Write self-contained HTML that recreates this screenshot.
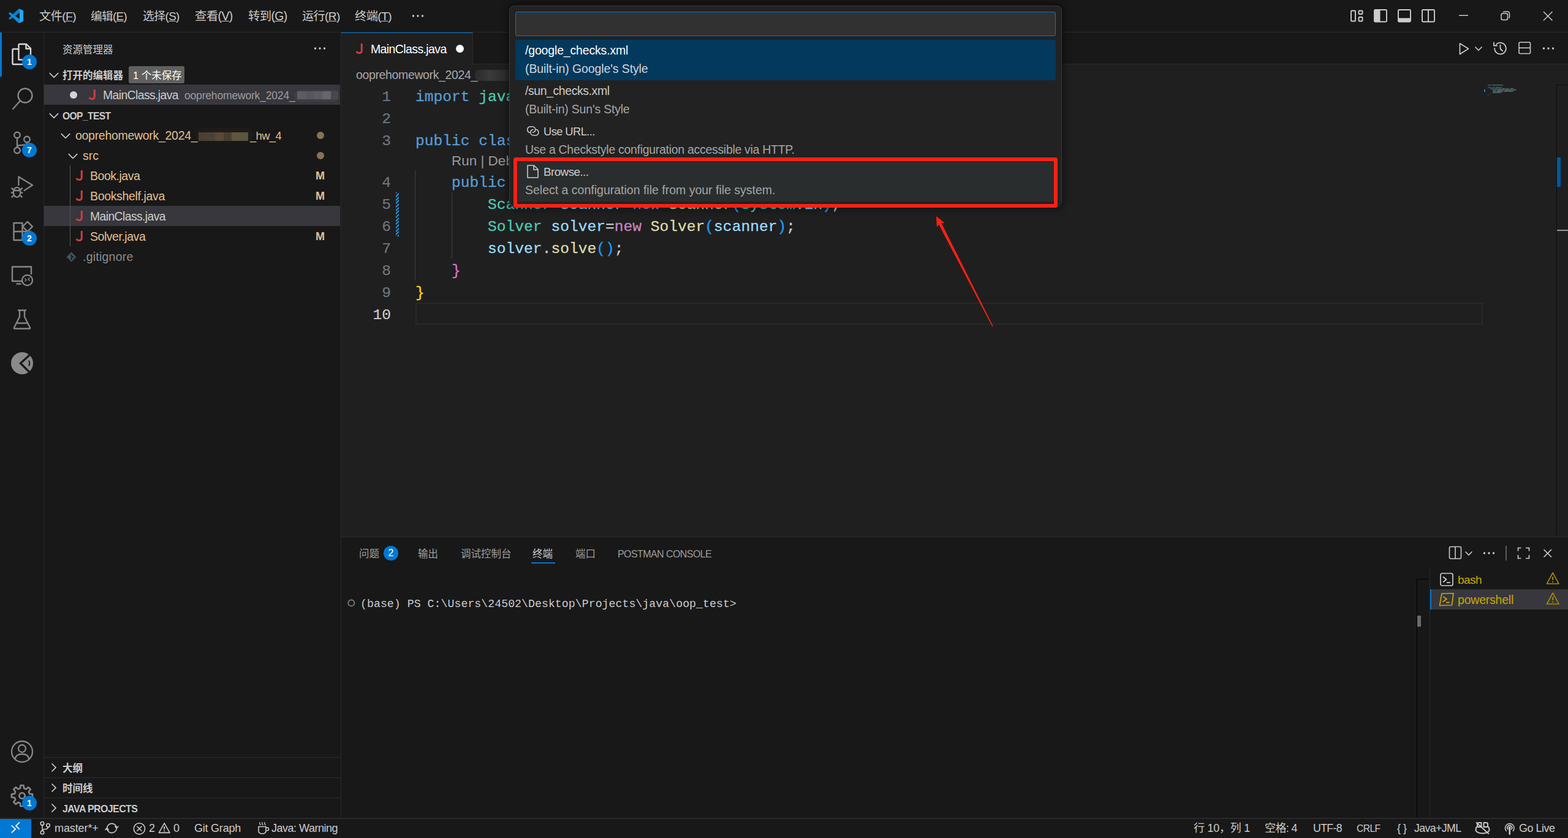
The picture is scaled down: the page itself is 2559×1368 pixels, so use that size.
<!DOCTYPE html>
<html lang="zh-CN">
<head>
<meta charset="utf-8">
<title>MainClass.java - oop_test - Visual Studio Code</title>
<style>
*{box-sizing:border-box;margin:0;padding:0}
html,body{width:2559px;height:1368px;overflow:hidden;background:#181818;}
body{font-family:"Liberation Sans","Noto Sans CJK SC",sans-serif;font-size:19.5px;color:#cccccc;position:relative;-webkit-font-smoothing:antialiased;}
.abs{position:absolute}
.t{position:absolute;white-space:nowrap;line-height:33px;height:33px;margin-top:1px}
svg{position:absolute;overflow:visible}
/* regions */
#titlebar{left:0;top:0;width:2559px;height:53px;background:#181818;border-bottom:1px solid #2b2b2b}
#activity{left:0;top:53px;width:72px;height:1282px;background:#181818;border-right:1px solid #2b2b2b}
#sidebar{left:72px;top:53px;width:485px;height:1282px;background:#181818;border-right:1px solid #2b2b2b}
#editor{left:557px;top:53px;width:2002px;height:823px;background:#1f1f1f}
#tabs{left:557px;top:53px;width:2002px;height:52px;background:#181818;border-bottom:1px solid #2b2b2b}
#panel{left:557px;top:876px;width:2002px;height:459px;background:#181818;border-top:1px solid #2b2b2b}
#status{left:0;top:1335px;width:2559px;height:33px;background:#181818;border-top:2px solid #292929}
.menu{top:9px;font-size:19.5px;color:#cccccc}
.row{position:absolute;left:72px;width:483px;height:33px}
.sel{background:#37373d}
.mod{color:#e2c08d}
.bold{font-weight:bold}
.J{color:#cc3e44;font-weight:bold;font-size:21px}
.code{margin-top:2.5px;-webkit-text-stroke:0.3px currentColor;position:absolute;white-space:pre;font-family:"Liberation Mono",monospace;font-size:24.6px;line-height:36px;height:36px;left:678px;color:#cccccc}
.ln{margin-top:2.5px;-webkit-text-stroke:0.2px currentColor;position:absolute;white-space:pre;font-family:"Liberation Mono",monospace;font-size:24.6px;line-height:36px;height:36px;width:80px;left:558px;text-align:right;color:#6e7681}
.kw{color:#569cd6}.ty{color:#4ec9b0}.va{color:#9cdcfe}.fn{color:#dcdcaa}.nw{color:#c586c0}
.b1{color:#ffd700}.b2{color:#da70d6}.b3{color:#179fff}
.st{position:absolute;white-space:nowrap;top:1337px;line-height:31px;height:31px;font-size:18px;color:#cccccc}
.badge{position:absolute;width:24px;height:24px;border-radius:12px;background:#0078d4;color:#fff;font-size:14px;font-weight:bold;text-align:center;line-height:24px}
.pt{top:887px;font-size:16.5px;color:#9d9d9d}
</style>
</head>
<body>
<div id="titlebar" class="abs"></div>
<div id="activity" class="abs"></div>
<div id="sidebar" class="abs"></div>
<div id="editor" class="abs"></div>
<div id="tabs" class="abs"></div>
<div id="panel" class="abs"></div>
<div id="status" class="abs"></div>
<!-- title bar -->
<svg style="left:13.9px;top:13.9px" width="24.2" height="24" viewBox="0 0 24.2 24">
  <path d="M16.5 0.2 L17.9 0.8 L17.9 6.8 L2.5 18.1 L0.2 16.6 Q-0.2 16.2 0.2 15.8 Z" fill="#0a7fcb"/>
  <path d="M16.5 23.8 L17.9 23.6 L17.9 17.3 L2.5 6.1 L0.2 7.4 Q-0.2 7.8 0.2 8.2 Z" fill="#0b8fdc"/>
  <path d="M17.3 0 L23.4 3 Q24.1 3.4 24.1 4.2 V19.8 Q24.1 20.6 23.4 21 L17.3 24 Q17.9 23.6 17.9 22.8 V1.2 Q17.9 0.4 17.3 0 Z" fill="#24a7f1"/>
</svg>
<div class="t menu" style="letter-spacing:-0.624px;font-size:19.25px;left:64px" id="m_1">文件(<u>F</u>)</div>
<div class="t menu" style="letter-spacing:-0.627px;font-size:18.64px;left:148px" id="m_2">编辑(<u>E</u>)</div>
<div class="t menu" style="letter-spacing:-0.626px;font-size:18.88px;left:233px" id="m_3">选择(<u>S</u>)</div>
<div class="t menu" style="letter-spacing:-0.626px;font-size:19.44px;left:318px" id="m_4">查看(<u>V</u>)</div>
<div class="t menu" style="letter-spacing:-0.618px;font-size:19.34px;left:405px" id="m_5">转到(<u>G</u>)</div>
<div class="t menu" style="letter-spacing:-0.613px;font-size:19.15px;left:493px" id="m_6">运行(<u>R</u>)</div>
<div class="t menu" style="letter-spacing:-0.611px;font-size:19.28px;left:579px" id="m_7">终端(<u>T</u>)</div>
<svg style="left:672px;top:23px" width="22" height="6"><circle cx="2.5" cy="3" r="1.7" fill="#ccc"/><circle cx="10" cy="3" r="1.7" fill="#ccc"/><circle cx="17.5" cy="3" r="1.7" fill="#ccc"/></svg>
<!-- layout icons -->
<svg style="left:2204px;top:16px" width="22" height="20" fill="none" stroke="#ccc" stroke-width="1.9"><rect x="1" y="1.5" width="7" height="17" rx="1"/><rect x="13.5" y="1.5" width="6" height="5.5" rx="1"/><rect x="13.5" y="12" width="6" height="6.5" rx="1"/></svg>
<svg style="left:2242px;top:15px" width="23" height="22" fill="none" stroke="#ccc" stroke-width="1.9"><rect x="1" y="1" width="20" height="19.5" rx="1.5"/><rect x="1.5" y="1.5" width="9" height="18.5" fill="#ccc" stroke="none"/></svg>
<svg style="left:2281px;top:15px" width="23" height="22" fill="none" stroke="#ccc" stroke-width="1.9"><rect x="1" y="1" width="20" height="19.5" rx="1.5"/><rect x="1.5" y="14.5" width="19" height="5.5" fill="#ccc" stroke="none"/></svg>
<svg style="left:2320px;top:15px" width="23" height="22" fill="none" stroke="#ccc" stroke-width="1.9"><rect x="1" y="1" width="20" height="19.5" rx="1.5"/><path d="M11 1 V20.5"/></svg>
<!-- window controls -->
<svg style="left:2381px;top:24px" width="16" height="3"><rect x="0" y="0.5" width="15" height="1.5" fill="#ccc"/></svg>
<svg style="left:2449px;top:18px" width="16" height="16" fill="none" stroke="#ccc" stroke-width="1.5"><rect x="1" y="4" width="10.5" height="10.5" rx="2.5"/><path d="M4 2.2 Q4.6 1 6.2 1 H11 Q14.5 1 14.5 4.5 V9.5 Q14.5 11 13.3 11.6"/></svg>
<svg style="left:2518px;top:18px" width="17" height="17" fill="none" stroke="#ccc" stroke-width="1.5"><path d="M1 1 L15.5 15.5 M15.5 1 L1 15.5"/></svg>

<!-- activity bar -->
<div class="abs" style="left:0;top:53px;width:3px;height:72px;background:#0078d4"></div>
<!-- files -->
<svg style="left:18px;top:70px" width="36" height="38" fill="none" stroke="#d7d7d7" stroke-width="2.4" stroke-linejoin="round"><path d="M12.5 27.5 V3.5 Q12.5 2 14 2 H25 L32 9 V26 Q32 27.5 30.5 27.5 Z"/><path d="M24.5 2.5 V9.5 H31.5"/><path d="M12.5 10 H4 Q2.5 10 2.5 11.5 V33.5 Q2.5 35 4 35 H21 Q22.5 35 22.5 33.5 V27.5"/></svg>
<!-- search -->
<svg style="left:18px;top:142px" width="38" height="40" fill="none" stroke="#868686" stroke-width="2.4"><circle cx="23" cy="14" r="11.5"/><path d="M15 22.5 L2.5 36.5"/></svg>
<!-- scm -->
<svg style="left:20px;top:213px" width="32" height="42" fill="none" stroke="#868686" stroke-width="2.4"><circle cx="8" cy="7.5" r="4.8"/><circle cx="24" cy="14.5" r="4.8"/><circle cx="8" cy="32.5" r="4.8"/><path d="M8 12.5 V27.5 M24 19.3 Q23.5 23 18 23.6 L8.5 24.8"/></svg>
<!-- debug -->
<svg style="left:16px;top:284px" width="40" height="42" fill="none" stroke="#868686" stroke-width="2.3" stroke-linejoin="round"><path d="M14.4 19 V4.5 L37 18.3 L22.8 27.6"/><ellipse cx="11.6" cy="29.8" rx="5.8" ry="8"/><path d="M6 27 H17.2 M5.8 26 L2.6 22.6 M17.4 26 L20.6 22.6 M5.6 30.5 H2 M17.6 30.5 H21.2 M6.2 35 L2.8 38.4 M17 35 L20.4 38.4"/></svg>
<!-- extensions -->
<svg style="left:20px;top:358px" width="36" height="38" fill="none" stroke="#868686" stroke-width="2.4" stroke-linejoin="round"><path d="M2.5 6 H16.5 V34 H2.5 Z M2.5 20 H16.5 M16.5 20 H30 V34 H16.5"/><path d="M24.9 3.8 L32.9 11.8 L24.9 19.8 L16.9 11.8 Z" fill="#181818"/></svg>
<!-- remote explorer -->
<svg style="left:17px;top:432px" width="40" height="36" fill="none" stroke="#868686" stroke-width="2.4" stroke-linejoin="round"><path d="M19 27 H3 V3.5 H34 V16"/><path d="M9.5 31.5 H17.5"/><circle cx="27.5" cy="25.5" r="8.5" fill="#181818"/><path d="M23.5 22.5 L26 25 L23.5 27.5 M31.5 21.5 L29 24 L31.5 26.5" stroke-width="1.6"/></svg>
<!-- flask -->
<svg style="left:20px;top:503px" width="34" height="36" fill="none" stroke="#868686" stroke-width="2.4" stroke-linejoin="round"><path d="M9 3.5 H23 M12 3.5 V14 L3 32 Q2.5 33.5 4 33.5 H28 Q29.5 33.5 29 32 L20 14 V3.5 M7 24.5 H25"/></svg>
<!-- codegeex-ish -->
<svg style="left:17px;top:574px" width="38" height="38"><circle cx="19" cy="19" r="18" fill="#8a8a8a"/><path d="M33 4 L16.5 19 L33 35.5" fill="none" stroke="#181818" stroke-width="3.2" stroke-linejoin="miter"/><path d="M30 14.5 Q32.5 19 30 23.5" fill="none" stroke="#181818" stroke-width="2"/></svg>
<!-- account -->
<svg style="left:15px;top:1206px" width="42" height="42" fill="none" stroke="#868686" stroke-width="2.3"><circle cx="21" cy="21" r="17"/><circle cx="21" cy="16" r="6"/><path d="M9.5 33.5 Q10.5 25 21 25 Q31.5 25 32.5 33.5"/></svg>
<!-- gear -->
<svg style="left:17px;top:1280px" width="38" height="38" viewBox="-19 -19 38 38" fill="none" stroke="#868686" stroke-width="2.7" stroke-linejoin="round"><circle r="4.7"/><path d="M-3.05 -12.23 L-2.54 -17.01 L2.54 -17.01 L3.05 -12.23 L6.49 -10.80 L10.23 -13.83 L13.83 -10.23 L10.80 -6.49 L12.23 -3.05 L17.01 -2.54 L17.01 2.54 L12.23 3.05 L10.80 6.49 L13.83 10.23 L10.23 13.83 L6.49 10.80 L3.05 12.23 L2.54 17.01 L-2.54 17.01 L-3.05 12.23 L-6.49 10.80 L-10.23 13.83 L-13.83 10.23 L-10.80 6.49 L-12.23 3.05 L-17.01 2.54 L-17.01 -2.54 L-12.23 -3.05 L-10.80 -6.49 L-13.83 -10.23 L-10.23 -13.83 L-6.49 -10.80 Z"/></svg>
<!-- badges -->
<div class="badge" style="left:36px;top:89px">1</div>
<div class="badge" style="left:36px;top:233px">7</div>
<div class="badge" style="left:36px;top:377px">2</div>
<div class="badge" style="left:36px;top:1299px">1</div>

<!-- sidebar -->
<div class="t" style="left:102px;top:64px;font-size:16.5px;color:#cccccc">资源管理器</div>
<svg style="left:512px;top:76px" width="22" height="6"><circle cx="2.5" cy="3" r="1.7" fill="#ccc"/><circle cx="10" cy="3" r="1.7" fill="#ccc"/><circle cx="17.5" cy="3" r="1.7" fill="#ccc"/></svg>
<!-- open editors header -->
<svg class="chd" style="left:80px;top:118px" width="17" height="10"><path d="M0.8 1.2 L8 8.4 L15.2 1.2" fill="none" stroke="#ccc" stroke-width="1.7"/></svg>
<div class="t bold" style="left:102px;top:106px;font-size:16.5px">打开的编辑器</div>
<div class="abs" style="left:210px;top:108px;width:91px;height:28px;background:#606060;border-radius:3px"></div>
<div class="t" style="left:217px;top:106px;font-size:16.5px;color:#fff">1 个未保存</div>
<div class="row sel" style="top:138px"></div>
<div class="abs" style="left:114px;top:149px;width:12px;height:12px;border-radius:6px;background:#d4d4d4"></div>
<svg style="left:143.7px;top:146.2px" width="14" height="19" fill="none" stroke="#cc3e44" stroke-width="3"><title>J</title><path d="M10.3 0 V11.3 Q10.3 15.6 6.4 15.6 Q3.4 15.6 1.6 13"/></svg>
<div class="t" style="letter-spacing:-0.59px;font-size:19.38px;;left:168px;top:138px;color:#cccccc" id="s_main1">MainClass.java</div>
<div class="t" style="letter-spacing:-0.178px;;left:301px;top:139px;color:#9d9d9d;font-size:17.5px" id="s_desc">ooprehomework_2024_</div>
<div class="abs" style="left:480px;top:146px;width:73px;height:20px;border-radius:9px;background:#3d3d43"></div><div class="abs" style="left:484.5px;top:149px;width:14px;height:12.5px;background:#5c5c61"></div><div class="abs" style="left:498.5px;top:149px;width:13.5px;height:12.5px;background:#56565b"></div><div class="abs" style="left:512px;top:149px;width:13.5px;height:12.5px;background:#5b5b60"></div><div class="abs" style="left:525.5px;top:149px;width:14px;height:12.5px;background:#67676b"></div><div class="abs" style="left:539.5px;top:149px;width:12px;height:12.5px;background:#47474c"></div>
<!-- OOP_TEST -->
<svg style="left:80px;top:184px" width="17" height="10"><path d="M0.8 1.2 L8 8.4 L15.2 1.2" fill="none" stroke="#ccc" stroke-width="1.7"/></svg>
<div class="t bold" style="letter-spacing:-0.598px;font-size:15.61px;;left:102px;top:172px;" id="s_oop">OOP_TEST</div>
<svg style="left:99px;top:217px" width="17" height="10"><path d="M0.8 1.2 L8 8.4 L15.2 1.2" fill="none" stroke="#ccc" stroke-width="1.7"/></svg>
<div class="t mod" style="letter-spacing:-0.295px;;left:123px;top:204px" id="s_fold">ooprehomework_2024_</div>
<div class="abs" style="left:320px;top:209px;width:93px;height:22px;border-radius:9px;background:#1e1b19"></div><div class="abs" style="left:323.8px;top:216px;width:13.7px;height:13.7px;background:#4e3f33"></div><div class="abs" style="left:337.4px;top:216px;width:13.7px;height:13.7px;background:#4a4237"></div><div class="abs" style="left:351.0px;top:216px;width:13.7px;height:13.7px;background:#5a4838"></div><div class="abs" style="left:364.6px;top:216px;width:13.7px;height:13.7px;background:#4a3d30"></div><div class="abs" style="left:378.2px;top:216px;width:13.7px;height:13.7px;background:#5e5640"></div><div class="abs" style="left:391.8px;top:216px;width:13.7px;height:13.7px;background:#59553f"></div>
<div class="t mod" style="letter-spacing:-0.594px;font-size:18.32px;;left:408px;top:204px" id="s_hw">_hw_4</div>
<div class="abs" style="left:517px;top:215px;width:12px;height:12px;border-radius:6px;background:#857354"></div>
<svg style="left:111px;top:250px" width="17" height="10"><path d="M0.8 1.2 L8 8.4 L15.2 1.2" fill="none" stroke="#ccc" stroke-width="1.7"/></svg>
<div class="t mod" style="left:135px;top:237px">src</div>
<div class="abs" style="left:517px;top:248px;width:12px;height:12px;border-radius:6px;background:#857354"></div>
<div class="abs" style="left:114px;top:270px;width:1px;height:132px;background:#585858"></div>
<svg style="left:122.7px;top:278.2px" width="14" height="19" fill="none" stroke="#cc3e44" stroke-width="3"><title>J</title><path d="M10.3 0 V11.3 Q10.3 15.6 6.4 15.6 Q3.4 15.6 1.6 13"/></svg>
<div class="t mod" style="letter-spacing:-0.471px;;left:147px;top:270px" id="s_book">Book.java</div>
<div class="t mod bold" style="left:515px;top:270px;font-size:18px">M</div>
<svg style="left:122.7px;top:311.2px" width="14" height="19" fill="none" stroke="#cc3e44" stroke-width="3"><title>J</title><path d="M10.3 0 V11.3 Q10.3 15.6 6.4 15.6 Q3.4 15.6 1.6 13"/></svg>
<div class="t mod" style="letter-spacing:-0.345px;;left:147px;top:303px" id="s_shelf">Bookshelf.java</div>
<div class="t mod bold" style="left:515px;top:303px;font-size:18px">M</div>
<div class="row sel" style="top:336px"></div>
<div class="abs" style="left:114px;top:336px;width:1px;height:33px;background:#585858"></div>
<svg style="left:122.7px;top:344.2px" width="14" height="19" fill="none" stroke="#cc3e44" stroke-width="3"><title>J</title><path d="M10.3 0 V11.3 Q10.3 15.6 6.4 15.6 Q3.4 15.6 1.6 13"/></svg>
<div class="t" style="letter-spacing:-0.59px;font-size:19.38px;;left:147px;top:336px;color:#cccccc" id="s_main2">MainClass.java</div>
<svg style="left:122.7px;top:377.2px" width="14" height="19" fill="none" stroke="#cc3e44" stroke-width="3"><title>J</title><path d="M10.3 0 V11.3 Q10.3 15.6 6.4 15.6 Q3.4 15.6 1.6 13"/></svg>
<div class="t mod" style="letter-spacing:-0.463px;;left:147px;top:369px" id="s_solver">Solver.java</div>
<div class="t mod bold" style="left:515px;top:369px;font-size:18px">M</div>
<svg style="left:108px;top:411px" width="17" height="17"><path d="M8.5 0.5 L16.5 8.5 L8.5 16.5 L0.5 8.5 Z" fill="#41535b"/><path d="M7 4.5 L10.5 8 M8.5 6 V12" stroke="#181818" stroke-width="1.3" fill="none"/><circle cx="8.5" cy="12" r="1.3" fill="#181818"/><circle cx="11" cy="8.5" r="1.3" fill="#181818"/></svg>
<div class="t" style="letter-spacing:0.228px;;left:135px;top:402px;color:#8c8c8c" id="s_git">.gitignore</div>
<!-- bottom sections -->
<div class="abs" style="left:72px;top:1236px;width:484px;height:1px;background:#2b2b2b"></div>
<div class="abs" style="left:72px;top:1269px;width:484px;height:1px;background:#2b2b2b"></div>
<div class="abs" style="left:72px;top:1302px;width:484px;height:1px;background:#2b2b2b"></div>
<svg style="left:83px;top:1245px" width="10" height="16"><path d="M1.5 1.5 L8 8 L1.5 14.5" fill="none" stroke="#ccc" stroke-width="1.7"/></svg>
<div class="t bold" style="left:102px;top:1237px;font-size:16.5px">大纲</div>
<svg style="left:83px;top:1278px" width="10" height="16"><path d="M1.5 1.5 L8 8 L1.5 14.5" fill="none" stroke="#ccc" stroke-width="1.7"/></svg>
<div class="t bold" style="left:102px;top:1270px;font-size:16.5px">时间线</div>
<svg style="left:83px;top:1311px" width="10" height="16"><path d="M1.5 1.5 L8 8 L1.5 14.5" fill="none" stroke="#ccc" stroke-width="1.7"/></svg>
<div class="t bold" style="letter-spacing:-0.594px;font-size:15.96px;;left:102px;top:1303px;" id="s_jp">JAVA PROJECTS</div>

<!-- tab -->
<div class="abs" style="left:557px;top:53px;width:215px;height:52px;background:#1f1f1f;border-right:1px solid #2b2b2b;border-top:1.5px solid #0078d4"></div>
<svg style="left:579.7px;top:71.2px" width="14" height="19" fill="none" stroke="#cc3e44" stroke-width="3"><title>J</title><path d="M10.3 0 V11.3 Q10.3 15.6 6.4 15.6 Q3.4 15.6 1.6 13"/></svg>
<div class="t" style="letter-spacing:-0.594px;font-size:19.48px;left:605px;top:63px;color:#ffffff" id="e_tab">MainClass.java</div>
<div class="abs" style="left:744px;top:72.5px;width:13px;height:13px;border-radius:7px;background:#ffffff"></div>
<!-- editor actions -->
<svg style="left:2380px;top:69px" width="20" height="22" fill="none" stroke="#ccc" stroke-width="1.7" stroke-linejoin="round"><path d="M2.5 2 L16.5 10.5 L2.5 19.5 Z"/></svg>
<svg style="left:2406px;top:75px" width="14" height="9"><path d="M1.5 1.5 L7 7 L12.5 1.5" fill="none" stroke="#ccc" stroke-width="1.6"/></svg>
<svg style="left:2436px;top:67px" width="25" height="24" fill="none" stroke="#ccc" stroke-width="1.8" stroke-linecap="round" stroke-linejoin="round"><path d="M3.2 12 A9.3 9.3 0 1 0 6.2 5.2"/><path d="M2 2.5 V7.5 H7"/><path d="M12.5 6.5 V12.5 L16 16"/></svg>
<svg style="left:2478px;top:68px" width="21" height="21" fill="none" stroke="#ccc" stroke-width="1.6"><rect x="1" y="1" width="18.5" height="18.5" rx="2"/><path d="M1 10.2 H19.5"/></svg>
<svg style="left:2517px;top:76px" width="22" height="6"><circle cx="2.5" cy="3" r="1.7" fill="#ccc"/><circle cx="10" cy="3" r="1.7" fill="#ccc"/><circle cx="17.5" cy="3" r="1.7" fill="#ccc"/></svg>
<!-- breadcrumb -->
<div class="t" style="letter-spacing:-0.363px;left:581px;top:105px;color:#a9a9a9" id="e_bc">ooprehomework_2024_</div>
<div class="abs" style="left:775px;top:114px;width:60px;height:18px;border-radius:6px;background:linear-gradient(90deg,#2a2a2a,#3a3a3a 40%,#303030 70%,#2c2c2c)"></div>
<!-- gutter / guides -->
<div class="abs" style="left:646px;top:314px;width:5px;height:72px;background:repeating-linear-gradient(135deg,#2090d8 0 2px,#1f1f1f 2px 4px)"></div>
<div class="abs" style="left:677px;top:278px;width:1px;height:180px;background:#404040"></div>
<div class="abs" style="left:736.5px;top:314px;width:1px;height:108px;background:#404040"></div>
<div class="abs" style="left:678px;top:494px;width:1742px;height:36px;border:2px solid #282828"></div>
<!-- line numbers -->
<div class="ln" style="top:138px">1</div>
<div class="ln" style="top:174px">2</div>
<div class="ln" style="top:210px">3</div>
<div class="ln" style="top:278px">4</div>
<div class="ln" style="top:314px">5</div>
<div class="ln" style="top:350px">6</div>
<div class="ln" style="top:386px">7</div>
<div class="ln" style="top:422px">8</div>
<div class="ln" style="top:458px">9</div>
<div class="ln" style="top:494px;color:#cccccc">10</div>
<!-- code -->
<div class="code" style="top:138px"><span class="kw">import</span> <span class="ty">java</span>.<span class="ty">util</span>.<span class="ty">Scanner</span>;</div>
<div class="code" style="top:210px"><span class="kw">public</span> <span class="kw">class</span> <span class="ty">MainClass</span> <span class="b1">{</span></div>
<div class="t" style="left:737px;top:245px;font-size:22.5px;color:#999999" id="e_lens">Run | Debug</div>
<div class="code" style="top:278px">    <span class="kw">public</span> <span class="kw">static</span> <span class="ty">void</span> <span class="fn">main</span><span class="b2">(</span><span class="ty">String</span><span class="b3">[]</span> <span class="va">args</span><span class="b2">)</span> <span class="b2">{</span></div>
<div class="code" style="top:314px">        <span class="ty">Scanner</span> <span class="va">scanner</span>=<span class="nw">new</span> <span class="fn">Scanner</span><span class="b3">(</span><span class="ty">System</span>.<span class="va">in</span><span class="b3">)</span>;</div>
<div class="code" style="top:350px">        <span class="ty">Solver</span> <span class="va">solver</span>=<span class="nw">new</span> <span class="fn">Solver</span><span class="b3">(</span><span class="va">scanner</span><span class="b3">)</span>;</div>
<div class="code" style="top:386px">        <span class="va">solver</span>.<span class="fn">solve</span><span class="b3">()</span>;</div>
<div class="code" style="top:422px">    <span class="b2">}</span></div>
<div class="code" style="top:458px"><span class="b1">}</span></div>
<!-- minimap -->
<div class="abs" style="left:2428px;top:138px;width:6px;height:2px;background:#4f86b8;opacity:.45"></div><div class="abs" style="left:2435px;top:138px;width:18px;height:2px;background:#3fa892;opacity:.45"></div><div class="abs" style="left:2428px;top:142px;width:6px;height:2px;background:#4f86b8;opacity:.45"></div><div class="abs" style="left:2435px;top:142px;width:5px;height:2px;background:#4f86b8;opacity:.45"></div><div class="abs" style="left:2441px;top:142px;width:9px;height:2px;background:#3fa892;opacity:.45"></div><div class="abs" style="left:2451px;top:142px;width:1px;height:2px;background:#8a8a8a;opacity:.45"></div><div class="abs" style="left:2432px;top:144px;width:6px;height:2px;background:#4f86b8;opacity:.45"></div><div class="abs" style="left:2439px;top:144px;width:6px;height:2px;background:#4f86b8;opacity:.45"></div><div class="abs" style="left:2446px;top:144px;width:4px;height:2px;background:#3fa892;opacity:.45"></div><div class="abs" style="left:2451px;top:144px;width:4px;height:2px;background:#aaa987;opacity:.45"></div><div class="abs" style="left:2455px;top:144px;width:1px;height:2px;background:#a06fa0;opacity:.45"></div><div class="abs" style="left:2456px;top:144px;width:6px;height:2px;background:#3fa892;opacity:.45"></div><div class="abs" style="left:2462px;top:144px;width:2px;height:2px;background:#1a7fc0;opacity:.45"></div><div class="abs" style="left:2465px;top:144px;width:4px;height:2px;background:#7fb0c8;opacity:.45"></div><div class="abs" style="left:2469px;top:144px;width:1px;height:2px;background:#a06fa0;opacity:.45"></div><div class="abs" style="left:2471px;top:144px;width:1px;height:2px;background:#a06fa0;opacity:.45"></div><div class="abs" style="left:2436px;top:146px;width:7px;height:2px;background:#3fa892;opacity:.45"></div><div class="abs" style="left:2444px;top:146px;width:7px;height:2px;background:#7fb0c8;opacity:.45"></div><div class="abs" style="left:2451px;top:146px;width:1px;height:2px;background:#8a8a8a;opacity:.45"></div><div class="abs" style="left:2452px;top:146px;width:3px;height:2px;background:#a06fa0;opacity:.45"></div><div class="abs" style="left:2456px;top:146px;width:7px;height:2px;background:#aaa987;opacity:.45"></div><div class="abs" style="left:2463px;top:146px;width:1px;height:2px;background:#1a7fc0;opacity:.45"></div><div class="abs" style="left:2464px;top:146px;width:6px;height:2px;background:#3fa892;opacity:.45"></div><div class="abs" style="left:2470px;top:146px;width:1px;height:2px;background:#8a8a8a;opacity:.45"></div><div class="abs" style="left:2471px;top:146px;width:2px;height:2px;background:#7fb0c8;opacity:.45"></div><div class="abs" style="left:2473px;top:146px;width:1px;height:2px;background:#1a7fc0;opacity:.45"></div><div class="abs" style="left:2474px;top:146px;width:1px;height:2px;background:#8a8a8a;opacity:.45"></div><div class="abs" style="left:2436px;top:148px;width:6px;height:2px;background:#3fa892;opacity:.45"></div><div class="abs" style="left:2443px;top:148px;width:6px;height:2px;background:#7fb0c8;opacity:.45"></div><div class="abs" style="left:2449px;top:148px;width:1px;height:2px;background:#8a8a8a;opacity:.45"></div><div class="abs" style="left:2450px;top:148px;width:3px;height:2px;background:#a06fa0;opacity:.45"></div><div class="abs" style="left:2454px;top:148px;width:6px;height:2px;background:#aaa987;opacity:.45"></div><div class="abs" style="left:2460px;top:148px;width:1px;height:2px;background:#1a7fc0;opacity:.45"></div><div class="abs" style="left:2461px;top:148px;width:7px;height:2px;background:#7fb0c8;opacity:.45"></div><div class="abs" style="left:2468px;top:148px;width:1px;height:2px;background:#1a7fc0;opacity:.45"></div><div class="abs" style="left:2469px;top:148px;width:1px;height:2px;background:#8a8a8a;opacity:.45"></div><div class="abs" style="left:2436px;top:150px;width:6px;height:2px;background:#7fb0c8;opacity:.45"></div><div class="abs" style="left:2442px;top:150px;width:1px;height:2px;background:#8a8a8a;opacity:.45"></div><div class="abs" style="left:2443px;top:150px;width:5px;height:2px;background:#aaa987;opacity:.45"></div><div class="abs" style="left:2448px;top:150px;width:2px;height:2px;background:#1a7fc0;opacity:.45"></div><div class="abs" style="left:2450px;top:150px;width:1px;height:2px;background:#8a8a8a;opacity:.45"></div><div class="abs" style="left:2432px;top:152px;width:1px;height:2px;background:#a06fa0;opacity:.45"></div><div class="abs" style="left:2428px;top:154px;width:1px;height:2px;background:#c0a820;opacity:.45"></div><div class="abs" style="left:2422px;top:146px;width:2px;height:4px;background:#0a84e0"></div>
<!-- overview ruler -->
<div class="abs" style="left:2540px;top:138px;width:19px;height:738px;border-left:1px solid #0e0e0e;border-top:1px solid #0e0e0e"></div>
<div class="abs" style="left:2541px;top:257px;width:6px;height:48px;background:#005a9e"></div>
<div class="abs" style="left:2541px;top:375px;width:18px;height:2px;background:#9a9a9a"></div>

<!-- panel tabs -->
<div class="t pt" style="left:586px" id="p_1">问题</div>
<div class="badge" style="left:626px;top:891px;font-weight:normal;font-size:16px">2</div>
<div class="t pt" style="left:682px" id="p_2">输出</div>
<div class="t pt" style="left:752px" id="p_3">调试控制台</div>
<div class="t pt" style="left:869px;color:#cccccc" id="p_4">终端</div>
<div class="abs" style="left:867px;top:918px;width:39px;height:2px;background:#0078d4"></div>
<div class="t pt" style="left:939px" id="p_5">端口</div>
<div class="t pt" style="letter-spacing:-0.595px;font-size:16.04px;left:1008px" id="p_6">POSTMAN CONSOLE</div>
<!-- panel actions -->
<svg style="left:2364px;top:891px" width="23" height="23" fill="none" stroke="#ccc" stroke-width="1.6"><rect x="1.5" y="1.5" width="19" height="19.5" rx="2"/><path d="M11 1.5 V21"/></svg>
<svg style="left:2390px;top:899px" width="14" height="9"><path d="M1.5 1.5 L7 7 L12.5 1.5" fill="none" stroke="#ccc" stroke-width="1.6"/></svg>
<svg style="left:2420px;top:900px" width="22" height="6"><circle cx="2.5" cy="3" r="1.7" fill="#ccc"/><circle cx="10" cy="3" r="1.7" fill="#ccc"/><circle cx="17.5" cy="3" r="1.7" fill="#ccc"/></svg>
<div class="abs" style="left:2457px;top:891px;width:2px;height:24px;background:#5a5a5a"></div>
<svg style="left:2476px;top:893px" width="22" height="20" fill="none" stroke="#ccc" stroke-width="1.7"><path d="M1.5 6.5 V1.5 H6.5 M14 1.5 H19.5 V6.5 M19.5 13 V18.5 H14 M6.5 18.5 H1.5 V13"/></svg>
<svg style="left:2518px;top:896px" width="16" height="15" fill="none" stroke="#ccc" stroke-width="1.7"><path d="M1.5 1 L14 13.5 M14 1 L1.5 13.5"/></svg>
<!-- terminal -->
<svg style="left:566px;top:977px" width="15" height="15"><circle cx="7.3" cy="7.3" r="5" fill="none" stroke="#6e6e6e" stroke-width="2.2"/></svg>
<div class="abs" style="left:588px;top:968px;height:36px;line-height:36px;white-space:pre;font-family:'Liberation Mono',monospace;font-size:18.28px;color:#cccccc" id="p_term">(base) PS C:\Users\24502\Desktop\Projects\java\oop_test&gt;</div>
<!-- terminal scrollbar / overview -->
<div class="abs" style="left:2312px;top:945px;width:22px;height:390px;border-left:1px solid #000;border-top:1px solid #000"></div>
<div class="abs" style="left:2313px;top:1005px;width:6px;height:18px;background:#6b6b6b"></div>
<div class="abs" style="left:2333px;top:929px;width:1px;height:406px;background:#2b2b2b"></div>
<!-- terminal tabs -->
<svg style="left:2350px;top:935px" width="23" height="23" fill="none" stroke="#ccc" stroke-width="1.7" stroke-linejoin="round"><rect x="1" y="1" width="20" height="20" rx="2.5"/><path d="M5 6.5 L10.5 11 L5 15.5" stroke-width="1.8"/><path d="M11 16 H17" stroke-width="1.8"/></svg>
<div class="t" style="letter-spacing:-0.588px;font-size:19.13px;left:2379px;top:929px;color:#cca700" id="p_bash">bash</div>
<svg style="left:2523px;top:933px" width="23" height="22" fill="none" stroke="#a88b00" stroke-width="1.6" stroke-linejoin="round"><path d="M11.2 2 L21 20 H1.5 Z"/><path d="M11.2 8.5 V14 M11.2 16 V18" stroke-width="2"/></svg>
<div class="abs" style="left:2334px;top:962px;width:225px;height:33px;background:#37373d"></div>
<div class="abs" style="left:2334px;top:962px;width:2px;height:33px;background:#0078d4"></div>
<svg style="left:2348px;top:967px" width="27" height="24" fill="none" stroke="#cca700" stroke-width="1.7" stroke-linejoin="round"><path d="M5 2 L24 1.5 L21.5 21 L1.5 21.5 Z"/><path d="M7.5 7 L13 11 L6.5 15.5" stroke-width="1.8"/><path d="M12 16.5 H18" stroke-width="1.8"/></svg>
<div class="t" style="letter-spacing:-0.212px;left:2379px;top:962px;color:#cca700" id="p_ps">powershell</div>
<svg style="left:2523px;top:966px" width="23" height="22" fill="none" stroke="#a88b00" stroke-width="1.6" stroke-linejoin="round"><path d="M11.2 2 L21 20 H1.5 Z"/><path d="M11.2 8.5 V14 M11.2 16 V18" stroke-width="2"/></svg>

<!-- status bar -->
<div class="abs" style="left:0;top:1337px;width:51px;height:31px;background:#0078d4"></div>


<svg style="left:0;top:1336px" width="300" height="32" fill="none" stroke="#ccc" stroke-width="1.6" stroke-linejoin="round">
<g transform="translate(0,-1336)">
<path d="M18.8 1347.6 L25.2 1353.5 L18.8 1359.3 M31.9 1342.3 L26 1348.2 L31.9 1354" stroke="#fff" stroke-width="1.7" stroke-linejoin="miter"/>
<circle cx="69" cy="1344.3" r="2.8"/><circle cx="78.5" cy="1347.3" r="2.8"/><circle cx="69" cy="1359" r="2.8"/><path d="M69 1347.1 V1356.2 M78.5 1350.1 Q78.3 1353.4 73.5 1353.8 Q69.6 1354 69 1356.2"/>
<path d="M174.6 1352 A7.9 7.9 0 0 1 190.3 1351 M187.9 1349.2 L190.4 1352 L192.9 1349.2" stroke-linecap="round"/>
<path d="M190.3 1352 A7.9 7.9 0 0 1 174.6 1353 M172 1354.6 L174.5 1351.8 L177 1354.6" stroke-linecap="round"/>
<circle cx="227.4" cy="1352.8" r="9.1"/><path d="M223.4 1348.8 L231.4 1356.8 M231.4 1348.8 L223.4 1356.8"/>
<path d="M268.2 1343.8 L277 1359.4 H259.4 Z"/><path d="M268.2 1349.2 V1354 M268.2 1355.6 V1357.3" stroke-width="1.9"/>
</g></svg>
<div class="st" style="letter-spacing:-0.104px;left:89px" id="t_master">master*+</div>


<div class="st" style="left:243px">2</div>

<div class="st" style="left:283px">0</div>
<div class="st" style="letter-spacing:-0.226px;left:317px" id="t_gg">Git Graph</div>
<svg style="left:419px;top:1341px" width="21" height="22" fill="none" stroke="#ccc" stroke-width="1.6" stroke-linecap="round" stroke-linejoin="round"><path d="M3 8.5 H15 V15 Q15 20 9 20 Q3 20 3 15 Z"/><path d="M15 10 H17 Q19.5 10 19.5 12.5 Q19.5 15 17 15 H15"/><path d="M5 1.5 Q4 3.5 6 5.5 M9 1.5 Q8 3.5 10 5.5 M13 1.5 Q12 3.5 14 5.5" stroke-width="1.3"/></svg>
<div class="st" style="letter-spacing:-0.492px;left:443px" id="t_jw">Java: Warning</div>
<div class="st" style="letter-spacing:-0.237px;left:1948px" id="t_pos">行 10，列 1</div>
<div class="st" style="letter-spacing:-0.599px;left:2064px" id="t_sp">空格: 4</div>
<div class="st" style="letter-spacing:-0.596px;font-size:17.68px;left:2143px" id="t_utf">UTF-8</div>
<div class="st" style="letter-spacing:-0.592px;font-size:15.7px;left:2214px" id="t_crlf">CRLF</div>
<div class="st" style="left:2280px;letter-spacing:4px" id="t_br">{}</div>
<div class="st" style="letter-spacing:-0.594px;font-size:17.73px;left:2308px" id="t_jml">Java+JML</div>
<svg style="left:2407px;top:1341px" width="25" height="22" fill="none" stroke="#ccc" stroke-width="1.9" stroke-linejoin="round"><path d="M4 4 Q4 2 7 2 H10.5 V9 H6 Q4 9 4 7 Z M14.5 2 H18 Q21 2 21 4 V7 Q21 9 19 9 H14.5 Z"/><path d="M4 8 Q1.5 10 1.5 13 V15 Q5 19.5 12.5 19.5 Q20 19.5 23.5 15 V13 Q23.5 10 21 8"/><path d="M2 1.5 L23 20.5" stroke-width="1.8"/></svg>
<svg style="left:2455px;top:1342px" width="18" height="21" fill="none" stroke="#ccc" stroke-width="1.6" stroke-linecap="round"><path d="M3.2 14.5 A7.3 7.3 0 1 1 14.4 14.5"/><path d="M5.9 11.8 A3.8 3.8 0 1 1 11.7 11.8"/><circle cx="8.8" cy="9.2" r="1.2" fill="#ccc"/><path d="M8.8 11 V19.5" stroke-width="2.6"/></svg>
<div class="st" style="letter-spacing:-0.507px;left:2479px" id="t_gl">Go Live</div>

<!-- quick pick -->
<div class="abs" style="left:831px;top:9px;width:902px;height:329px;background:#222222;border:1px solid #3a3a3a;border-radius:9px;box-shadow:0 0 12px 3px rgba(0,0,0,.48)"></div>
<div class="abs" style="left:841px;top:19px;width:882px;height:40px;background:#313131;border:1px solid #0078d4;border-radius:3px"></div>
<div class="abs" style="left:841px;top:65px;width:882px;height:66px;background:#04395e;border-radius:4px"></div>
<div class="abs" style="left:845px;top:263px;width:876px;height:66px;background:#2a2d2e"></div>
<div class="t" style="letter-spacing:-0.165px;left:857px;top:65px;color:#ffffff" id="q_1a">/google_checks.xml</div>
<div class="t" style="letter-spacing:-0.102px;left:857px;top:95px;color:#cfd6dc" id="q_1b">(Built-in) Google's Style</div>
<div class="t" style="letter-spacing:-0.436px;left:857px;top:131px;color:#cccccc" id="q_2a">/sun_checks.xml</div>
<div class="t" style="letter-spacing:-0.202px;left:857px;top:161px;color:#a6a6a6" id="q_2b">(Built-in) Sun's Style</div>
<svg style="left:858.8px;top:206px" width="24" height="18" fill="none" stroke="#ccc" stroke-width="1.6" stroke-linecap="round"><g transform="translate(0.8,0.8)"><path d="M4.2 9.6 A5 5 0 0 1 5 0 H9.2 A5 5 0 0 1 14 5 Q14 8.6 9.8 9.5"/><path d="M15.8 4.6 A5 5 0 0 1 15 14.2 H10.8 A5 5 0 0 1 6 9.2 Q6 5.6 10.2 4.7"/></g></svg>
<div class="t" style="letter-spacing:-0.598px;font-size:18.36px;left:887px;top:197px;color:#cccccc" id="q_3a">Use URL...</div>
<div class="t" style="letter-spacing:-0.299px;left:857px;top:227px;color:#a6a6a6" id="q_3b">Use a Checkstyle configuration accessible via HTTP.</div>
<svg style="left:859px;top:268px" width="22" height="24" fill="none" stroke="#ccc" stroke-width="1.6" stroke-linejoin="round"><path d="M2 2 H12.5 L19 8.5 V22 H2 Z"/><path d="M12 2.5 V9 H18.5"/></svg>
<div class="t" style="letter-spacing:-0.594px;font-size:18.9px;left:887px;top:263px;color:#cccccc" id="q_4a">Browse...</div>
<div class="t" style="letter-spacing:-0.002px;left:857px;top:293px;color:#a6a6a6" id="q_4b">Select a configuration file from your file system.</div>
<!-- red annotation -->
<div class="abs" style="left:838px;top:257px;width:888px;height:82px;border:6.5px solid #fe2013;border-radius:4px"></div>
<svg style="left:0;top:0" width="2559" height="1368"><path d="M1528 353 L1541.5 364 L1536.6 364.6 L1620.6 532.2 L1619.4 533 L1532.3 366.8 L1529 370.5 Z" fill="#fe2013"/></svg>

</body>
</html>
